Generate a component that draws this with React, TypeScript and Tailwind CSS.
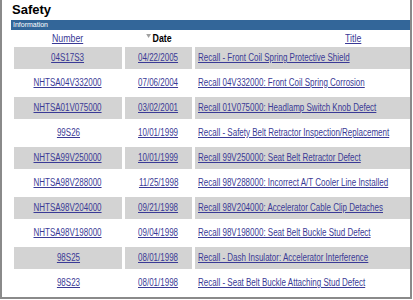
type Recall = {
  number: string;
  date: string;
  title: string;
};

const recalls: Recall[] = [
  { number: "04S17S3", date: "04/22/2005", title: "Recall - Front Coil Spring Protective Shield" },
  { number: "NHTSA04V332000", date: "07/06/2004", title: "Recall 04V332000: Front Coil Spring Corrosion" },
  { number: "NHTSA01V075000", date: "03/02/2001", title: "Recall 01V075000: Headlamp Switch Knob Defect" },
  { number: "99S26", date: "10/01/1999", title: "Recall - Safety Belt Retractor Inspection/Replacement" },
  { number: "NHTSA99V250000", date: "10/01/1999", title: "Recall 99V250000: Seat Belt Retractor Defect" },
  { number: "NHTSA98V288000", date: "11/25/1998", title: "Recall 98V288000: Incorrect A/T Cooler Line Installed" },
  { number: "NHTSA98V204000", date: "09/21/1998", title: "Recall 98V204000: Accelerator Cable Clip Detaches" },
  { number: "NHTSA98V198000", date: "09/04/1998", title: "Recall 98V198000: Seat Belt Buckle Stud Defect" },
  { number: "98S25", date: "08/01/1998", title: "Recall - Dash Insulator: Accelerator Interference" },
  { number: "98S23", date: "08/01/1998", title: "Recall - Seat Belt Buckle Attaching Stud Defect" },
];

// link text squeezed to the narrow look of the old page
function NarrowLink({ children, left }: { children: React.ReactNode; left?: boolean }) {
  return (
    <a href="#" className="text-[#3a3a96]">
      <span
        className={
          left
            ? "inline-block whitespace-nowrap underline scale-x-[0.8] origin-left"
            : "inline-block whitespace-nowrap underline scale-x-[0.8]"
        }
      >
        {children}
      </span>
    </a>
  );
}

export default function App() {
  return (
    <div className="w-[412px] h-[299px] overflow-hidden bg-white border-l-2 border-r-2 border-b-2 border-[#8a8a8a] pl-[9px] font-['Liberation_Sans',Arial,sans-serif] text-black">
      <div className="h-[20px] pt-[2px] pl-[1px] text-[13px] leading-[16px] font-bold">Safety</div>
      <div className="h-[10px] bg-[#336699] pl-[2px] text-[7px] leading-[10px] text-white">Information</div>
      <table className="table-fixed w-[503px] border-separate border-spacing-[3px]">
        <thead>
          <tr className="h-[11px] text-[11px] leading-[11px]">
            <th className="w-[108px] font-normal text-center p-0">
              <NarrowLink>Number</NarrowLink>
            </th>
            <th className="w-[67px] text-center p-0 font-bold">
              <span className="inline-block whitespace-nowrap scale-x-[0.8]">
                <span className="inline-block align-top mt-[1px] mr-[2px] w-0 h-0 border-l-[3px] border-r-[3px] border-t-[4px] border-l-transparent border-r-transparent border-t-[#a0a0a0]" />
                Date
              </span>
            </th>
            <th className="w-[316px] font-normal text-center p-0">
              <NarrowLink>Title</NarrowLink>
            </th>
          </tr>
        </thead>
        <tbody>
          {recalls.map((r, i) => {
            const cell = i % 2 === 0 ? "bg-[#d3d3d3]" : "bg-white";
            return (
              <tr key={r.number + i} className="h-[22px] text-[10px] leading-[12px]">
                <td className={`${cell} text-center p-0`}>
                  <NarrowLink>{r.number}</NarrowLink>
                </td>
                <td className={`${cell} text-center p-0`}>
                  <NarrowLink>{r.date}</NarrowLink>
                </td>
                <td className={`${cell} text-left p-0 pl-[3px]`}>
                  <NarrowLink left>{r.title}</NarrowLink>
                </td>
              </tr>
            );
          })}
        </tbody>
      </table>
    </div>
  );
}
